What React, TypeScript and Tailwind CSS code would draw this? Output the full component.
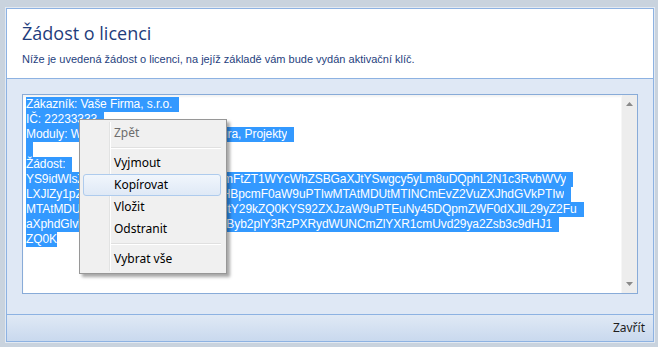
import React from 'react';

// license request payload, shown base64 encoded in 76 char rows
const payload =
  'a/build=\r\na/customer-name=Vaše Firma, s.r.o.\r\na/customer-reg-id=22233333\r\n' +
  'a/expiration=2010-05-12\r\na/generated=2010-05-12\r\na/hardware-code\r\n' +
  'a/version=1.7.9\r\nfeature/organization=true\r\nfeature/projects=true\r\nfeature/workflow=true\r\n';

function encode(text: string) {
  const bytes = new TextEncoder().encode(text);
  let bin = '';
  bytes.forEach((b) => (bin += String.fromCharCode(b)));
  return btoa(bin).match(/.{1,76}/g) ?? [];
}

const lines = [
  'Zákazník: Vaše Firma, s.r.o.',
  'IČ: 22233333',
  'Moduly: Workflow, Organizační struktura, Projekty',
  '',
  'Žádost:',
  ...encode(payload),
];

function MenuItem({ label, disabled, active }: { label: string; disabled?: boolean; active?: boolean }) {
  return (
    <div className="relative h-[22px] flex items-center">
      {active && (
        <div className="absolute left-[3px] right-[5px] inset-y-0 rounded-[3px] border border-[#aecbed] bg-gradient-to-b from-[#f1f6fc] to-[#dfe9f6]" />
      )}
      <span className={`relative pl-[34px] ${disabled ? 'text-[#6d6d6d]' : 'text-black'}`}>{label}</span>
    </div>
  );
}

function Separator() {
  return (
    <div className="h-[8px] flex flex-col justify-center pl-[30px] pr-[5px]">
      <div className="h-px bg-[#e0e0e0]" />
      <div className="h-px bg-white" />
    </div>
  );
}

function ContextMenu() {
  return (
    <div className="absolute left-[79px] top-[119px] w-[148px] pt-[2px] pb-[3px] border border-[#979797] bg-[#f0f0f0] shadow-[3px_3px_3px_rgba(0,0,0,0.35)] font-['Noto_Sans',sans-serif] text-[12px]">
      <div className="absolute left-[29px] top-[2px] bottom-[2px] w-[2px] flex">
        <div className="w-px bg-[#e2e3e3]" />
        <div className="w-px bg-white" />
      </div>
      <MenuItem label="Zpět" disabled />
      <Separator />
      <MenuItem label="Vyjmout" />
      <MenuItem label="Kopírovat" active />
      <MenuItem label="Vložit" />
      <MenuItem label="Odstranit" />
      <Separator />
      <MenuItem label="Vybrat vše" />
    </div>
  );
}

export default function App() {
  return (
    <div className="relative w-[658px] h-[347px] bg-[#c9d3de] pt-[8px] pl-[6px] pr-[4px] pb-[5px] overflow-hidden">
      <div className="h-full flex flex-col border border-[#8db2e2] ring-1 ring-[#e2e9f2] bg-[#dfe8f5]">
        <div className="h-[70px] shrink-0 bg-white border-b border-[#8db2e2] px-[15px] pt-[12px]">
          <div className="font-['Open_Sans',sans-serif] text-[18px] leading-[24px] text-[#1f3d7c]">Žádost o licenci</div>
          <div className="mt-[7px] font-['Liberation_Sans',sans-serif] text-[11px] leading-[14px] text-[#1f3f7e]">
            Níže je uvedená žádost o licenci, na jejíž základě vám bude vydán aktivační klíč.
          </div>
        </div>

        <div className="flex-1 px-[15px] pt-[15px] pb-[20px]">
          <div className="h-full flex border border-[#88abd8] bg-white shadow-[inset_0_2px_2px_rgba(0,0,0,0.05)]">
            <div className="flex-1 pl-[3px] pt-[2px] font-['Liberation_Sans',sans-serif] text-[12px] leading-[15px] tracking-[-0.08px]">
              {lines.map((line, i) => (
                <div key={i} className="h-[15px] flex whitespace-pre">
                  <span className="bg-[#3399ff] text-white">{line}</span>
                  {i < lines.length - 1 && <span className="w-[7px] bg-[#3399ff]" />}
                </div>
              ))}
            </div>
            <div className="w-[16px] flex flex-col justify-between items-center py-[7px] bg-[#ededed] border-l border-[#f6f6f6]">
              <svg width="7" height="4" viewBox="0 0 7 4">
                <polygon points="3.5,0 7,4 0,4" fill="#8a8a8a" />
              </svg>
              <svg width="7" height="4" viewBox="0 0 7 4">
                <polygon points="0,0 7,0 3.5,4" fill="#8a8a8a" />
              </svg>
            </div>
          </div>
        </div>

        <div className="h-[27px] shrink-0 border-t border-[#8db2e2] bg-gradient-to-b from-[#e0e9f5] to-[#c9d9ee] flex items-center justify-end pr-[8px]">
          <span className="font-['Noto_Sans',sans-serif] text-[12px] text-[#1e1e1e]">Zavřít</span>
        </div>
      </div>
      <ContextMenu />
    </div>
  );
}
